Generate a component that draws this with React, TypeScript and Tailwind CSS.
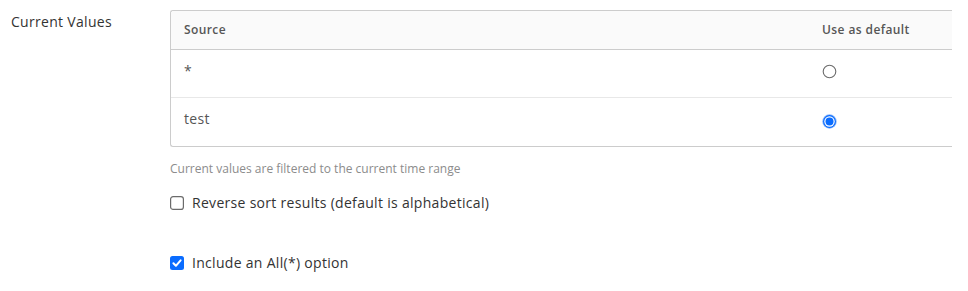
import React from "react";

function Radio({ checked }: { checked: boolean }) {
  if (checked) {
    return (
      <svg width="15" height="15" viewBox="0 0 15 15" className="block">
        <circle cx="7.5" cy="7.5" r="7.2" fill="#2d7bf4" opacity="0.55" />
        <circle cx="7.5" cy="7.5" r="6.4" fill="#0a6cff" />
        <circle cx="7.5" cy="7.5" r="5.2" fill="#ffffff" />
        <circle cx="7.5" cy="7.5" r="4" fill="#0a6cff" />
      </svg>
    );
  }
  return (
    <svg width="15" height="15" viewBox="0 0 15 15" className="block">
      <circle cx="7.5" cy="7.5" r="6.3" fill="#fff" stroke="#6b6b6b" strokeWidth="1.1" />
    </svg>
  );
}

function Checkbox({ checked }: { checked: boolean }) {
  if (checked) {
    return (
      <svg width="14" height="14" viewBox="0 0 14 14" className="block shrink-0">
        <rect x="0" y="0" width="14" height="14" rx="2.5" fill="#0a6cff" />
        <path d="M3.4 7.2 L5.9 9.8 L10.6 4.3" fill="none" stroke="#fff" strokeWidth="2" strokeLinecap="round" strokeLinejoin="round" />
      </svg>
    );
  }
  return (
    <svg width="14" height="14" viewBox="0 0 14 14" className="block shrink-0">
      <rect x="0.6" y="0.6" width="12.8" height="12.8" rx="2.5" fill="#fff" stroke="#6b6b6b" strokeWidth="1.2" />
    </svg>
  );
}

export default function App() {
  return (
    <div
      className="w-[968px] h-[291px] bg-white flex pl-[11px] pt-[12px]"
      style={{ fontFamily: '"Open Sans", "Liberation Sans", sans-serif' }}
    >
      <div className="w-[159px] shrink-0 text-[14px] tracking-[0.3px] leading-[19px] text-[#333333]">Current Values</div>
      <div className="w-[782px] flex flex-col -mt-[2px]">
        <div className="border-l border-t border-b border-[#cccccc] rounded-tl-[3px] rounded-bl-[3px]">
          <div className="grid grid-cols-[638px_1fr] h-[39px] items-center bg-[#fafafa] border-b border-[#cccccc] rounded-tl-[3px] text-[12px] tracking-[0.4px] font-semibold text-[#565656]">
            <div className="pl-[13px]">Source</div>
            <div className="pl-[13px]">Use as default</div>
          </div>
          <div className="grid grid-cols-[638px_1fr] h-[48px] border-b border-[#e8e8e8] text-[14px] tracking-[0.3px] text-[#565656]">
            <div className="pl-[13px] pt-[11px] leading-[19px]">*</div>
            <div className="pl-[13px] pt-[14px]">
              <Radio checked={false} />
            </div>
          </div>
          <div className="grid grid-cols-[638px_1fr] h-[48px] text-[14px] tracking-[0.3px] text-[#565656]">
            <div className="pl-[13px] pt-[11px] leading-[19px]">test</div>
            <div className="pl-[13px] pt-[16px]">
              <Radio checked={true} />
            </div>
          </div>
        </div>
        <div className="mt-[13px] text-[12px] leading-[17px] text-[#8c8c8c]">
          Current values are filtered to the current time range
        </div>
        <label className="mt-[16px] flex items-center gap-[8px] text-[14px] tracking-[0.3px] leading-[19px] text-[#333333]">
          <Checkbox checked={false} />
          <span>Reverse sort results (default is alphabetical)</span>
        </label>
        <label className="mt-[41px] flex items-center gap-[8px] text-[14px] tracking-[0.3px] leading-[19px] text-[#333333]">
          <Checkbox checked={true} />
          <span>Include an All(*) option</span>
        </label>
      </div>
    </div>
  );
}
